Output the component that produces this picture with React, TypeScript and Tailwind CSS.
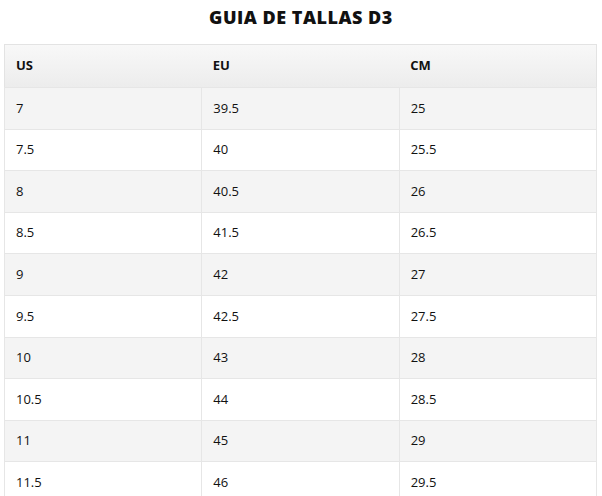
const rows = [
  ["7", "39.5", "25"],
  ["7.5", "40", "25.5"],
  ["8", "40.5", "26"],
  ["8.5", "41.5", "26.5"],
  ["9", "42", "27"],
  ["9.5", "42.5", "27.5"],
  ["10", "43", "28"],
  ["10.5", "44", "28.5"],
  ["11", "45", "29"],
  ["11.5", "46", "29.5"],
]

export default function App() {
  return (
    <div className="h-[496px] overflow-hidden bg-white px-1 font-['Open_Sans',sans-serif] text-[#111]">
      <h2 className="pt-[5px] text-center text-[18px] font-extrabold leading-[24px] tracking-[0.5px] text-[#111]">
        GUIA DE TALLAS D3
      </h2>
      <table className="mt-[15px] w-[593px] table-fixed border-collapse border border-[#e3e3e3] text-[13px]">
        <thead>
          <tr className="h-[43px] bg-gradient-to-b from-[#f8f8f8] to-[#ececec]">
            <th className="pl-[11px] text-left font-bold">US</th>
            <th className="pl-[11px] text-left font-bold">EU</th>
            <th className="pl-[11px] text-left font-bold">CM</th>
          </tr>
        </thead>
        <tbody>
          {rows.map((r, i) => (
            <tr key={i} className={`h-[41.6px] ${i % 2 === 0 ? "bg-[#f4f4f4]" : "bg-white"}`}>
              {r.map((c, j) => (
                <td key={j} className="border border-[#e6e6e6] pl-[11px] font-normal">
                  {c}
                </td>
              ))}
            </tr>
          ))}
        </tbody>
      </table>
    </div>
  )
}
